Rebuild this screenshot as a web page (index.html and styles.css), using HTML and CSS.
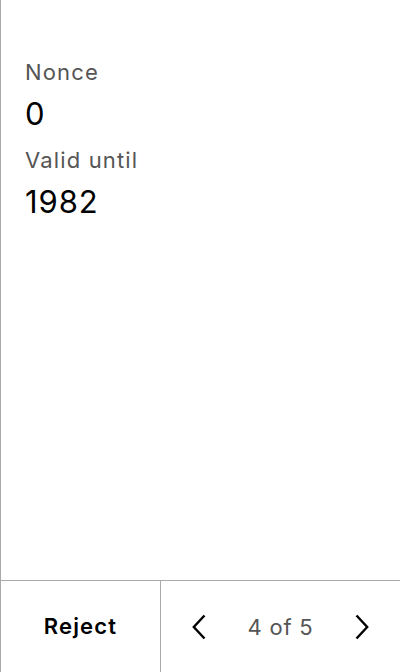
FILE: index.html
```html
<!DOCTYPE html>
<html>
<head>
<meta charset="utf-8">
<link rel="stylesheet" href="styles.css">
</head>
<body>
<div class="app">
  <div class="content">
    <div class="label">Nonce</div>
    <div class="value">0</div>
    <div class="label">Valid until</div>
    <div class="value">1982</div>
  </div>
  <div class="footer">
    <button class="reject">Reject</button>
    <div class="pager">
      <svg class="chev" width="14" height="26" viewBox="0 0 14 26"><path d="M12.5 1.5 L1.8 13 L12.5 24.5" fill="none" stroke="#000" stroke-width="2.4"/></svg>
      <span class="count">4 of 5</span>
      <svg class="chev" width="14" height="26" viewBox="0 0 14 26"><path d="M1.5 1.5 L12.2 13 L1.5 24.5" fill="none" stroke="#000" stroke-width="2.4"/></svg>
    </div>
  </div>
</div>
</body>
</html>
```
FILE: styles.css
```css
html, body { margin: 0; padding: 0; background: #fff; }
body { font-family: Inter, "Noto Sans", sans-serif; }
.app {
  height: 672px;
  display: flex;
  flex-direction: column;
  border-left: 1px solid #aaa;
  box-sizing: border-box;
}
.content {
  flex: 1;
  padding: 56px 24px 0;
}
.label {
  font-size: 22px;
  line-height: 32px;
  letter-spacing: 1.15px;
  color: #555;
}
.value {
  font-size: 31px;
  line-height: 52px;
  letter-spacing: 0.9px;
  color: #000;
  margin-bottom: 4px;
}
.footer {
  height: 92px;
  box-sizing: border-box;
  border-top: 1px solid #aaa;
  display: grid;
  grid-template-columns: 160px 1fr;
}
.reject {
  border: none;
  border-right: 1px solid #aaa;
  background: #fff;
  font-family: inherit;
  font-size: 22px;
  font-weight: 600;
  letter-spacing: 1.2px;
  color: #000;
  padding: 0 0 2px;
}
.pager {
  display: flex;
  align-items: center;
  justify-content: center;
  gap: 41px;
}
.count {
  font-size: 22px;
  letter-spacing: 0.8px;
  color: #555;
}
.chev { display: block; }
```
